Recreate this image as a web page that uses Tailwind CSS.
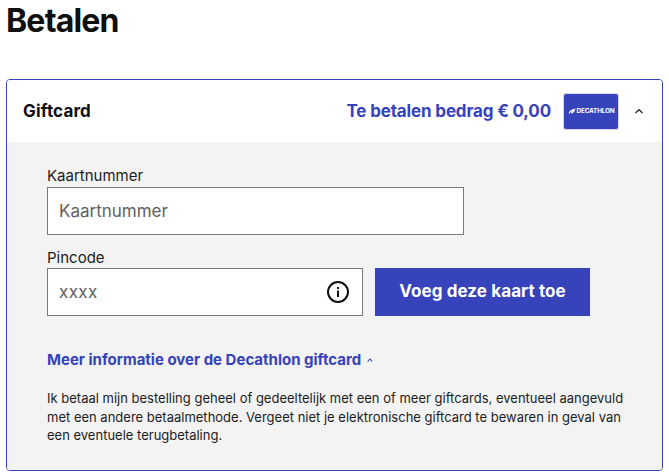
<!DOCTYPE html>
<html lang="nl">
<head>
  <meta charset="UTF-8">
  <meta name="viewport" content="width=device-width, initial-scale=1.0">
  <title>Betalen</title>
  <script src="https://cdn.jsdelivr.net/npm/@tailwindcss/browser@4"></script>
</head>
<body class="bg-white text-[#101010] font-['Inter',sans-serif] overflow-hidden">
  <div class="px-[6px] w-[669px]">
    <h1 class="h-[79px] pt-[2px] text-[32px] leading-[38px] font-bold tracking-[-0.8px]">Betalen</h1>

    <!-- Giftcard card -->
    <div class="w-[657px] h-[392px] border border-[#3643ba] rounded-[4px] overflow-hidden">
      <div class="h-[62px] flex items-center pl-4 pr-[18px] bg-white">
        <span class="pt-px text-[17px] font-bold tracking-[0.15px]">Giftcard</span>
        <span class="pt-px ml-auto text-[17px] font-bold text-[#3643ba] tracking-[-0.15px]">Te betalen bedrag € 0,00</span>
        <div class="ml-[12px] w-[56px] h-[37px] rounded-[3px] bg-[#3643ba] border border-[#d5d6e8] flex items-center justify-center gap-px">
          <svg width="8" height="6" viewBox="0 0 8 6" fill="none"><path d="M0.5 5.5C1 3 3.5 1 7.5 0.5C7 3.5 5 5.5 2.5 5.5C3 4 4 3 5 2.5C3.5 3 2 4 1.5 5.5Z" fill="#fff"/></svg>
          <span class="text-[6.5px] leading-none font-bold text-white tracking-[-0.25px]">DECATHLON</span>
        </div>
        <svg class="ml-[15px]" width="10" height="6" viewBox="0 0 10 6" fill="none"><path d="M1.5 5L5 1.7L8.5 5" stroke="#2b2b2b" stroke-width="1.4"/></svg>
      </div>

      <div class="h-[328px] bg-[#f3f3f3] pl-10 pr-[30px] pt-[24px]">
        <label class="block text-[15px] leading-[20px] text-[#1c1c1c]">Kaartnummer</label>
        <input class="block w-[417px] h-[48px] mt-[1px] px-[11px] bg-white border border-[#7a7a7a] text-[17px] text-[#616161] placeholder:text-[#616161] outline-none" placeholder="Kaartnummer">

        <label class="block mt-[13px] text-[15px] leading-[20px] text-[#1c1c1c]">Pincode</label>
        <div class="flex gap-[12px] items-start">
          <div class="relative w-[316px] h-[48px]">
            <input class="block w-full h-full px-[11px] bg-white border border-[#7a7a7a] text-[17px] tracking-[0.4px] text-[#616161] placeholder:text-[#616161] outline-none" placeholder="xxxx">
            <svg class="absolute right-[13px] top-[12px]" width="24" height="24" viewBox="0 0 24 24" fill="none">
              <circle cx="12" cy="12" r="10" stroke="#101010" stroke-width="2"/>
              <rect x="11" y="10.5" width="2" height="6.5" fill="#101010"/>
              <rect x="11" y="7" width="2" height="2" fill="#101010"/>
            </svg>
          </div>
          <button class="w-[215px] h-[48px] bg-[#3643ba] text-white text-[17px] font-bold tracking-[0.1px]">Voeg deze kaart toe</button>
        </div>

        <div class="mt-[34px] flex items-center gap-[6px] text-[15px] leading-[20px] font-bold text-[#3643ba]">
          <span>Meer informatie over de Decathlon giftcard</span>
          <svg width="6" height="4" viewBox="0 0 6 4" fill="none"><path d="M0.7 3.5L3 1L5.3 3.5" stroke="#3643ba" stroke-width="1.1"/></svg>
        </div>

        <p class="mt-[19px] w-[580px] text-[13px] leading-[18.5px] text-[#1c1c1c]">Ik betaal mijn bestelling geheel of gedeeltelijk met een of meer giftcards, eventueel aangevuld met een andere betaalmethode. Vergeet niet je elektronische giftcard te bewaren in geval van een eventuele terugbetaling.</p>
      </div>
    </div>
  </div>
</body>
</html>
